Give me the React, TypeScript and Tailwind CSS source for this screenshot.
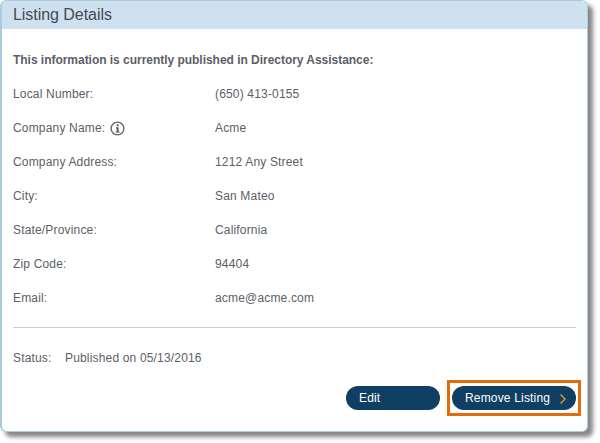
const rows = [
  { label: 'Local Number:', value: '(650) 413-0155' },
  { label: 'Company Name:', value: 'Acme', info: true },
  { label: 'Company Address:', value: '1212 Any Street' },
  { label: 'City:', value: 'San Mateo' },
  { label: 'State/Province:', value: 'California' },
  { label: 'Zip Code:', value: '94404' },
  { label: 'Email:', value: 'acme@acme.com' },
]

function InfoIcon() {
  return (
    <svg width="15" height="15" viewBox="0 0 15 15" className="ml-[5px]">
      <circle cx="7.5" cy="7.5" r="6.4" fill="none" stroke="#666" strokeWidth="1.4" />
      <rect x="6.7" y="3.3" width="1.9" height="1.9" fill="#555" />
      <path d="M6 6.3h2.6v4.2h1v1.1H5.6v-1.1h1.1v-3.1H6z" fill="#555" />
    </svg>
  )
}

export default function App() {
  return (
    <div className="w-[600px] h-[443px] bg-white font-['Liberation_Sans',Arial,sans-serif] text-[12px] tracking-[0.17px] text-[#5c6066] overflow-hidden">
      <div className="w-[588px] h-[432px] bg-white border border-[#a9cddf] border-l-2 rounded-[6px] shadow-[5px_5px_4px_rgba(70,70,70,0.65)] overflow-hidden flex flex-col">
        <div className="h-[28px] shrink-0 bg-[#cfe1ee] pl-[11px] text-[16px] tracking-[-0.05px] leading-[27px] text-[#414b55]">
          Listing Details
        </div>
        <div className="flex-1 flex flex-col pl-[11px] pr-[11px]">
          <div className="mt-[23px] h-[16px] leading-[16px] font-bold tracking-[-0.03px]">
            This information is currently published in Directory Assistance:
          </div>
          <div className="mt-[9px] flex flex-col">
            {rows.map((row) => (
              <div key={row.label} className="h-[34px] flex items-center">
                <div className="w-[202px] flex items-center">
                  {row.label}
                  {row.info && <InfoIcon />}
                </div>
                <div>{row.value}</div>
              </div>
            ))}
          </div>
          <div className="mt-[12px] border-t border-[#cccccc]" />
          <div className="mt-[22px] h-[16px] leading-[16px] flex">
            <span className="w-[52px]">Status:</span>
            <span>Published on 05/13/2016</span>
          </div>
          <div className="mt-[14px] flex justify-end items-center">
            <button className="w-[94px] h-[24px] mr-[7px] rounded-full bg-[#0f3f62] text-white text-left pl-[13px]">
              Edit
            </button>
            <div className="border-[3px] border-[#e36c0a] px-[2px] py-[3px] mr-[-5px]">
              <button className="w-[124px] h-[24px] rounded-full bg-[#0f3f62] text-white flex items-center pl-[13px]">
                Remove Listing
                <svg width="8" height="12" viewBox="0 0 8 12" className="ml-[9px] mt-[2px]">
                  <path d="M1.5 1.5l4.5 4.5-4.5 4.5" fill="none" stroke="#f39a1e" strokeWidth="1.3" />
                </svg>
              </button>
            </div>
          </div>
        </div>
      </div>
    </div>
  )
}
